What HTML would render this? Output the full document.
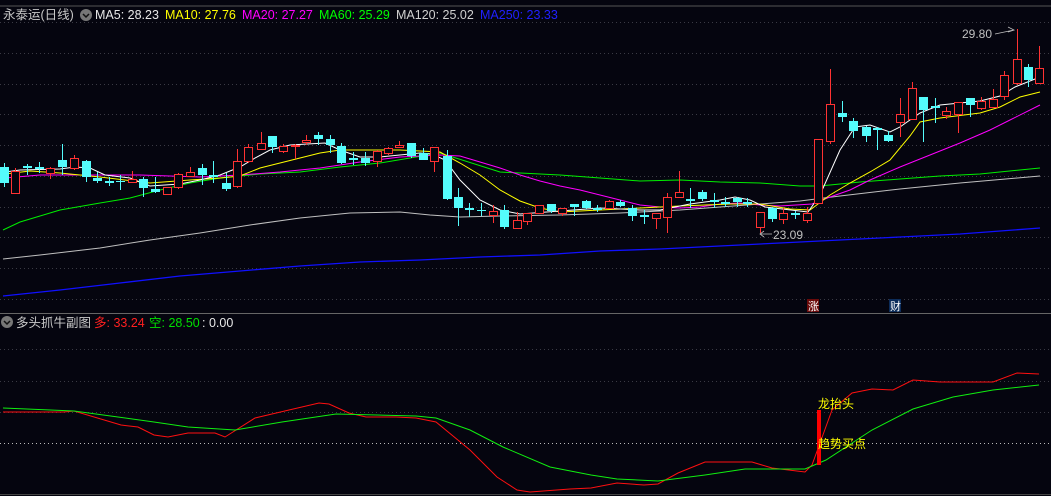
<!DOCTYPE html>
<html><head><meta charset="utf-8">
<style>
html,body{margin:0;padding:0;background:#05050f;width:1051px;height:496px;overflow:hidden}
svg{display:block}
text{font-family:"Liberation Sans","Noto Sans CJK SC",sans-serif}
</style></head>
<body>
<svg id="s" width="1051" height="496" xmlns="http://www.w3.org/2000/svg">
<rect width="1051" height="496" fill="#05050f"/>
<line x1="0" y1="6" x2="1051" y2="6" stroke="#555" stroke-width="1"/>
<g id="grid"></g>
<line x1="0" y1="313.5" x2="1051" y2="313.5" stroke="#666" stroke-width="1"/>
<line x1="0" y1="494.5" x2="1051" y2="494.5" stroke="#444" stroke-width="1"/>
<g id="ma"></g>
<g id="c"></g>
<g id="sub"></g>
<!-- header -->
<text x="3" y="19" font-size="12.5" fill="#c8c8c8">永泰运(日线)</text>
<circle cx="86" cy="15" r="6" fill="#777"/><path d="M83 14 L86 17 L89 14" stroke="#111" stroke-width="1.5" fill="none"/>
<text x="95" y="19" font-size="12.5" fill="#e8e8e8">MA5: 28.23</text>
<text x="165" y="19" font-size="12.5" fill="#ffff00">MA10: 27.76</text>
<text x="242" y="19" font-size="12.5" fill="#ff00ff">MA20: 27.27</text>
<text x="319" y="19" font-size="12.5" fill="#00ff00">MA60: 25.29</text>
<text x="396" y="19" font-size="12.5" fill="#d0d0d0">MA120: 25.02</text>
<text x="480" y="19" font-size="12.5" fill="#2020ff">MA250: 23.33</text>
<!-- annotations -->
<text x="962" y="38" font-size="12" fill="#c0c0c0">29.80</text>
<path d="M995 34 L1014 30 M1008 27 L1014 30 L1008 32" stroke="#c0c0c0" fill="none" stroke-width="0.8"/>
<text x="773" y="239" font-size="12" fill="#c0c0c0">23.09</text>
<path d="M760 234 L772 234 M764 231 L760 234 L764 237" stroke="#c0c0c0" fill="none" stroke-width="0.8"/>
<rect x="807" y="299" width="12" height="13" fill="#6a0a0a"/>
<text x="808" y="310" font-size="11" fill="#fff">涨</text>
<rect x="889" y="299" width="12" height="13" fill="#0c2c5a"/>
<text x="890" y="310" font-size="11" fill="#fff">财</text>
<!-- sub header -->
<circle cx="7" cy="322" r="6" fill="#777"/><path d="M4 321 L7 324 L10 321" stroke="#111" stroke-width="1.5" fill="none"/>
<text x="16" y="327" font-size="12.5" fill="#c8c8c8">多头抓牛副图</text>
<text x="94" y="327" font-size="12.5" fill="#ff2020">多: 33.24</text>
<text x="149" y="327" font-size="12.5" fill="#00e000">空: 28.50</text>
<text x="202" y="327" font-size="12.5" fill="#e8e8e8">: 0.00</text>
<rect x="817" y="410" width="4" height="55" fill="#ff0000"/>
<text x="818" y="408" font-size="12" fill="#ffff00">龙抬头</text>
<text x="818" y="448" font-size="12" fill="#ffff00">趋势买点</text>
</svg>
<script>
var NS="http://www.w3.org/2000/svg";
function el(p,t,a){var e=document.createElementNS(NS,t);for(var k in a)e.setAttribute(k,a[k]);document.getElementById(p).appendChild(e);return e;}
[22,53,84,114,145,176,207,237,268,299,349,381,412].forEach(function(y){el("grid","line",{x1:0,x2:1051,y1:y+.5,y2:y+.5,stroke:"#3a3a44","stroke-dasharray":"1,3"});});
el("grid","line",{x1:0,x2:1051,y1:443.5,y2:443.5,stroke:"#bbbbbb","stroke-dasharray":"1,3"});
function pl(g,pts,col,w){el(g,"polyline",{points:pts.map(function(p){return p.join(",")}).join(" "),fill:"none",stroke:col,"stroke-width":w||1});}
pl("ma",[[3,296],[60,290],[120,283],[180,276],[240,271],[300,266],[360,262],[420,260],[480,257],[540,255],[600,251],[660,249],[720,246],[780,243],[840,240],[900,237],[960,234],[1040,228]],"#1010ff",1.3);
pl("ma",[[3,259],[40,255],[100,248],[150,240],[200,233],[250,225],[300,218],[350,213],[400,212],[430,215],[460,217],[500,216],[560,215],[620,213],[680,210],[720,207],[760,204],[800,201],[840,196],[900,189],[960,183],[1040,176]],"#c0c0c0");
pl("ma",[[3,230],[20,222],[60,210],[100,203],[130,198],[160,190],[190,183],[220,178],[260,174],[300,172],[340,167],[380,163],[410,158],[440,153],[500,172],[560,175],[600,178],[640,181],[680,180],[720,182],[760,183],[800,186],[820,186],[860,182],[900,179],[940,176],[980,174],[1040,168]],"#00ee00");
pl("ma",[[5,178],[40,175],[140,175],[200,177],[240,175],[280,172],[320,168],[360,162],[400,157],[440,155],[460,156],[480,162],[500,168],[520,175],[540,181],[560,186],[580,190],[600,195],[620,200],[640,205],[660,207],[680,208],[700,207],[720,204],[740,203],[760,205],[780,206],[812,204],[830,197],[850,190],[870,180],[900,167],[930,155],[960,143],[990,130],[1010,120],[1040,105]],"#ff00ff");
pl("ma",[[5,174],[30,171],[60,173],[100,177],[150,183],[190,180],[220,178],[240,176],[260,168],[280,163],[300,158],[320,153],[340,150],[400,150],[440,152],[460,163],[480,175],[500,190],[520,201],[540,208],[560,212],[600,210],[640,208],[680,206],[730,204],[760,204],[790,209],[810,210],[830,195],[850,183],[870,172],[890,160],[910,136],[920,122],[940,118],[980,113],[1000,107],[1020,97],[1040,92]],"#ffff00");
pl("ma",[[5,172],[20,170],[60,169],[75,167],[90,168],[105,175],[130,178],[150,186],[180,184],[200,180],[220,175],[240,167],[255,158],[270,150],[290,145],[325,143],[340,150],[360,157],[380,157],[420,153],[432,154],[445,160],[460,180],[480,200],[500,210],[520,214],[560,211],[600,208],[640,210],[660,210],[690,204],[720,200],[735,197],[750,200],[765,207],[808,212],[820,195],[840,150],[855,127],[870,125],[890,132],[900,127],[920,113],[940,105],[980,101],[1000,96],[1015,87],[1040,77]],"#ffffff");
// candles: x, top, bottom, hi, lo, up(1=red)
var C=[[4,167,183,163,187,0],[15,171,193,168,194,1],[27,166,168,164,175,0],[39,167,169,162,173,0],[50,168,173,167,179,1],[62,160,167,144,175,0],[74,158,168,155,170,1],[86,161,177,160,182,0],[97,178,181,172,183,0],[109,181,183,177,186,0],[120,181,182,175,190,0],[132,179,182,171,183,1],[143,179,188,177,197,0],[155,189,192,177,193,0],[167,187,194,187,194,1],[178,174,187,173,189,1],[190,172,176,167,177,1],[202,168,175,164,185,0],[213,175,177,161,183,0],[226,183,189,173,191,0],[237,161,186,149,188,1],[248,147,161,144,163,1],[261,143,149,132,149,1],[272,136,147,136,153,0],[283,146,151,144,153,1],[295,145,146,144,159,1],[306,140,142,135,145,1],[318,135,139,132,145,0],[330,139,145,135,153,0],[341,146,163,143,164,0],[353,158,160,152,165,0],[365,158,163,152,166,0],[377,151,161,150,167,1],[388,148,153,147,155,1],[399,145,147,141,147,1],[411,143,156,143,158,0],[423,153,160,148,160,0],[434,147,161,147,172,1],[447,156,199,150,200,0],[458,197,208,188,226,0],[469,208,210,203,217,0],[481,210,211,203,216,0],[493,211,215,205,223,1],[504,210,227,205,229,0],[517,220,228,212,228,1],[527,213,221,213,225,1],[539,205,213,205,214,1],[551,204,211,204,213,0],[562,208,213,208,216,1],[574,204,207,204,216,0],[586,201,208,200,209,0],[597,208,210,205,212,0],[609,201,208,200,209,1],[620,202,206,200,207,0],[632,208,216,205,221,0],[644,215,217,210,224,0],[656,213,218,213,229,1],[667,197,217,193,233,1],[679,192,197,171,197,1],[690,199,201,188,208,0],[702,192,199,190,201,0],[714,200,202,193,208,0],[725,202,204,197,207,0],[737,198,202,197,207,0],[747,202,204,198,207,0],[760,212,227,212,233,1],[772,208,219,207,222,0],[783,213,219,208,224,1],[795,213,215,211,219,0],[807,213,220,207,223,1],[818,139,203,139,204,1],[830,104,141,69,144,1],[842,113,117,101,122,0],[853,121,131,118,138,0],[866,127,136,126,142,0],[877,128,130,127,150,0],[888,135,141,131,142,0],[900,114,122,98,137,1],[912,88,119,82,119,1],[923,97,110,97,142,0],[935,106,108,98,123,0],[946,111,115,107,119,1],[958,102,114,102,133,1],[970,98,105,98,117,0],[981,101,108,97,110,1],[993,99,107,89,107,1],[1004,75,96,71,100,1],[1017,59,83,29,85,1],[1028,67,80,64,87,0],[1039,68,83,46,83,1]];
C.forEach(function(c){var x=c[0],col=c[5]?"#ff3232":"#54fcfc";
 el("c","line",{x1:x+.5,x2:x+.5,y1:c[3],y2:c[2]>c[4]?c[2]:c[4],stroke:col});
 var h=Math.max(c[2]-c[1],1);
 if(c[5]){el("c","line",{x1:x+.5,x2:x+.5,y1:c[3],y2:c[1],stroke:col});el("c","line",{x1:x+.5,x2:x+.5,y1:c[2],y2:c[4],stroke:col});
  el("c","rect",{x:x-3.5,y:c[1]+.5,width:8,height:h,fill:"#05050f",stroke:col});}
 else el("c","rect",{x:x-4,y:c[1],width:9,height:h,fill:col});
});
pl("sub",[[3,412],[64,412],[74,411],[121,425],[138,427],[154,435],[168,437],[188,433],[215,433],[225,437],[255,418],[289,410],[319,403],[329,404],[349,413],[366,417],[396,417],[416,418],[436,422],[470,450],[497,477],[517,490],[530,492],[570,489],[591,488],[617,483],[644,485],[658,484],[678,473],[705,462],[752,462],[772,468],[805,472],[812,465],[832,410],[852,393],[872,389],[893,390],[913,380],[940,382],[993,382],[1017,373],[1039,374]],"#ff1010");
pl("sub",[[3,408],[74,411],[154,422],[188,427],[235,430],[282,422],[336,414],[416,416],[436,418],[470,430],[503,447],[550,467],[591,475],[617,479],[658,481],[705,475],[745,469],[805,469],[826,460],[872,430],[913,409],[953,397],[993,390],[1039,385]],"#10ee10");
</script>
</body></html>
